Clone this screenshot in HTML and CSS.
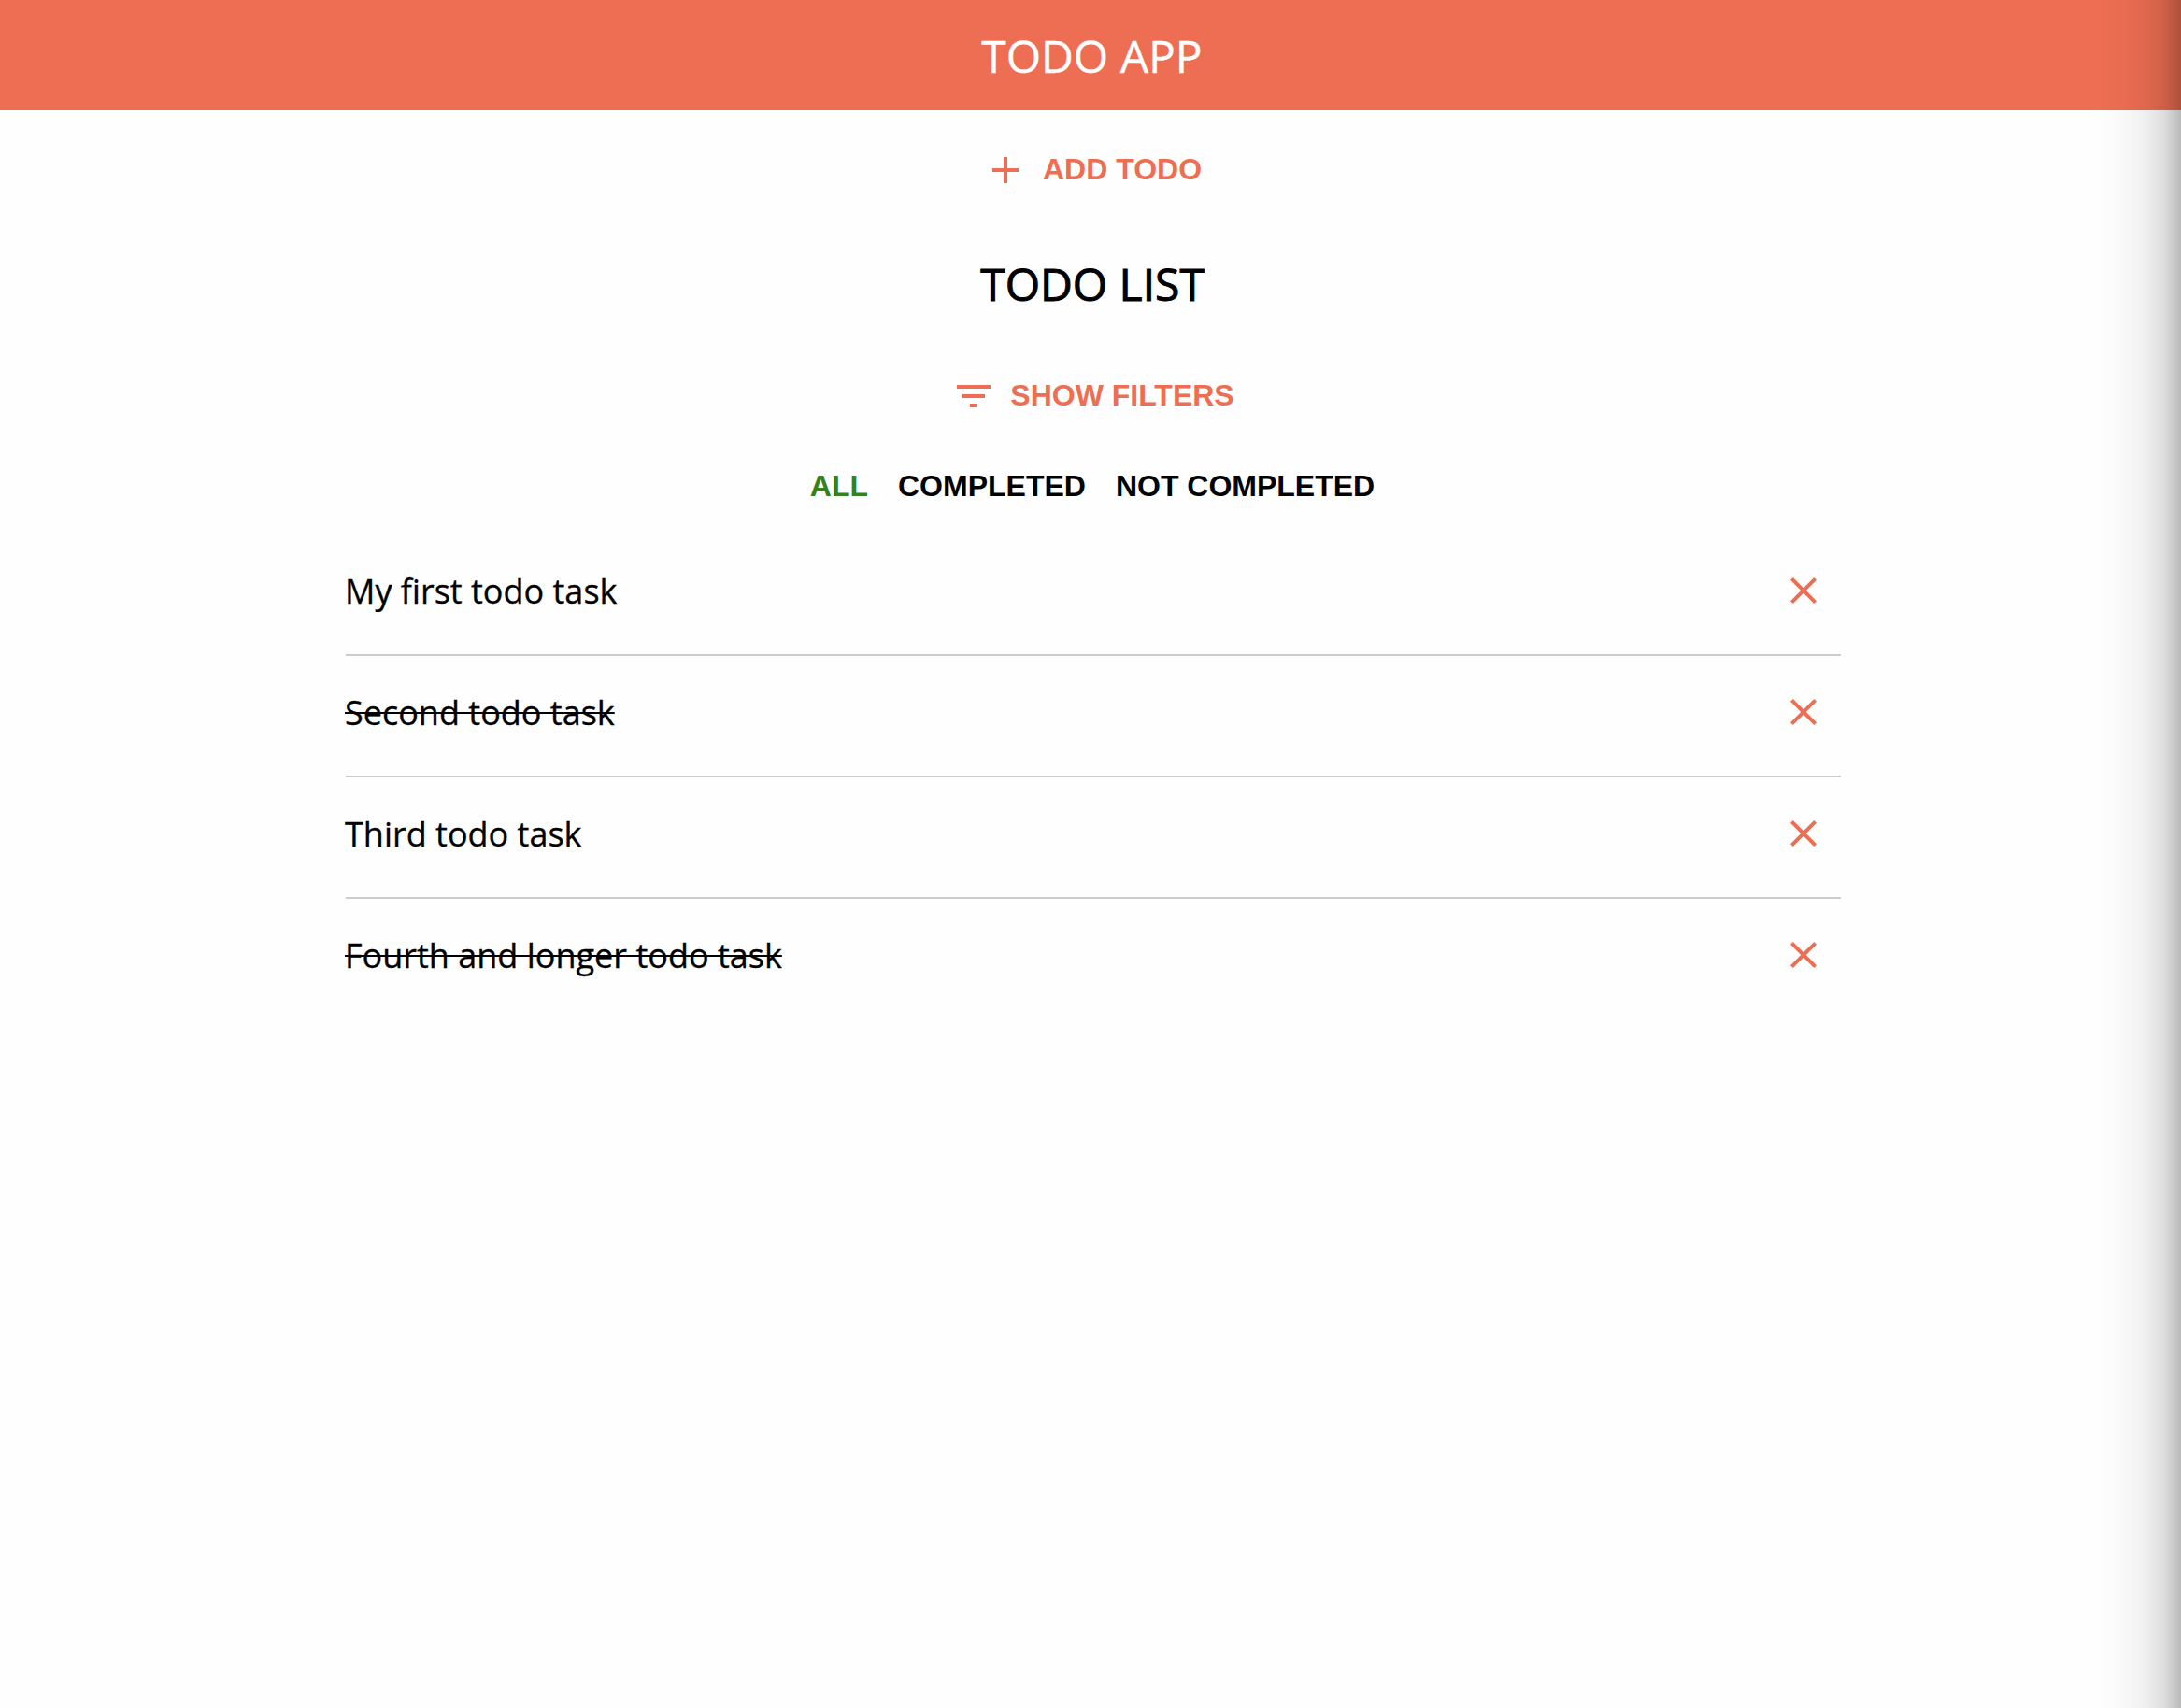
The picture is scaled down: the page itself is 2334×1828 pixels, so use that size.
FILE: index.html
```html
<!DOCTYPE html>
<html lang="en">
<head>
<meta charset="utf-8">
<title>Todo App</title>
<link rel="stylesheet" href="styles.css">
</head>
<body>
<header class="header"><h1 class="header-title">TODO APP</h1></header>
<main class="main">
  <button class="action add">
    <svg class="icon" viewBox="0 0 24 24"><path d="M19 13h-6v6h-2v-6H5v-2h6V5h2v6h6v2z"/></svg>
    <span>ADD TODO</span>
  </button>
  <h2 class="list-title">TODO LIST</h2>
  <button class="action show">
    <svg class="icon" viewBox="0 0 24 24"><path d="M10 18h4v-2h-4v2zM3 6v2h18V6H3zm3 7h12v-2H6v2z"/></svg>
    <span>SHOW FILTERS</span>
  </button>
  <nav class="filters">
    <button class="filter active">ALL</button>
    <button class="filter">COMPLETED</button>
    <button class="filter">NOT COMPLETED</button>
  </nav>
  <ul class="list">
    <li class="item"><span class="task">My first todo task</span><svg class="icon" viewBox="0 0 24 24"><path d="M19 6.41L17.59 5 12 10.59 6.41 5 5 6.41 10.59 12 5 17.59 6.41 19 12 13.41 17.59 19 19 17.59 13.41 12z"/></svg></li>
    <li class="item"><span class="task done">Second todo task</span><svg class="icon" viewBox="0 0 24 24"><path d="M19 6.41L17.59 5 12 10.59 6.41 5 5 6.41 10.59 12 5 17.59 6.41 19 12 13.41 17.59 19 19 17.59 13.41 12z"/></svg></li>
    <li class="item"><span class="task">Third todo task</span><svg class="icon" viewBox="0 0 24 24"><path d="M19 6.41L17.59 5 12 10.59 6.41 5 5 6.41 10.59 12 5 17.59 6.41 19 12 13.41 17.59 19 19 17.59 13.41 12z"/></svg></li>
    <li class="item"><span class="task done">Fourth and longer todo task</span><svg class="icon" viewBox="0 0 24 24"><path d="M19 6.41L17.59 5 12 10.59 6.41 5 5 6.41 10.59 12 5 17.59 6.41 19 12 13.41 17.59 19 19 17.59 13.41 12z"/></svg></li>
  </ul>
</main>
<div class="edge-shadow"></div>
</body>
</html>
```
FILE: styles.css
```css
* { box-sizing: border-box; margin: 0; padding: 0; }

body {
  height: 1828px;
  overflow: hidden;
  background: #fefefe;
  color: #000;
  font-family: "Open Sans", sans-serif;
}

.header {
  display: flex;
  justify-content: center;
  height: 118px;
  padding: 27px 0 0 3px;
  background: #ed6e52;
  color: #fff;
}

.header-title {
  font-size: 48px;
  font-weight: 400;
  line-height: 65px;
  -webkit-text-stroke: .4px currentColor;
}

.main {
  display: flex;
  flex-direction: column;
  align-items: center;
  padding: 40px 0 0 6px;
}

button {
  border: 0;
  background: none;
  color: inherit;
  font: bold 32px/36px "Liberation Sans", Arial, sans-serif;
}

.action {
  display: flex;
  align-items: center;
  gap: 16px;
  height: 48px;
  margin-right: 2px;
  color: #ed6e52;
}

.show { gap: 15px; margin-right: 1px; }

.action span { padding-bottom: 3px; }

.icon {
  display: block;
  width: 48px;
  height: 48px;
  fill: #ed6e52;
}

.list-title {
  margin: 65px 2px 64px 0;
  font-size: 48px;
  font-weight: 500;
  line-height: 65px;
  -webkit-text-stroke: 1px currentColor;
}

.filters {
  display: flex;
  gap: 32px;
  margin: 54px 2px 0 0;
}

.active { color: #34811f; }

.list {
  width: 1600px;
  margin-top: 34px;
  list-style: none;
}

.item {
  display: flex;
  align-items: center;
  justify-content: space-between;
  height: 130px;
  padding: 0 16px 8px 0;
  border-bottom: 2px solid #ccc;
  font-size: 36px;
  line-height: 50px;
}

.item:last-child { border-bottom-color: transparent; }

.task {
  margin-left: -1px;
  padding-top: 2px;
  -webkit-text-stroke: .3px currentColor;
}

.done { text-decoration: line-through 2px; }

/* Darkened strip along the right window edge */
.edge-shadow {
  position: absolute;
  top: 0;
  right: 0;
  width: 90px;
  height: 1828px;
  background: linear-gradient(to right, rgba(0,0,0,0), rgba(0,0,0,.02) 30%, rgba(0,0,0,.06) 58%, rgba(0,0,0,.13) 80%, rgba(0,0,0,.27));
}
```
